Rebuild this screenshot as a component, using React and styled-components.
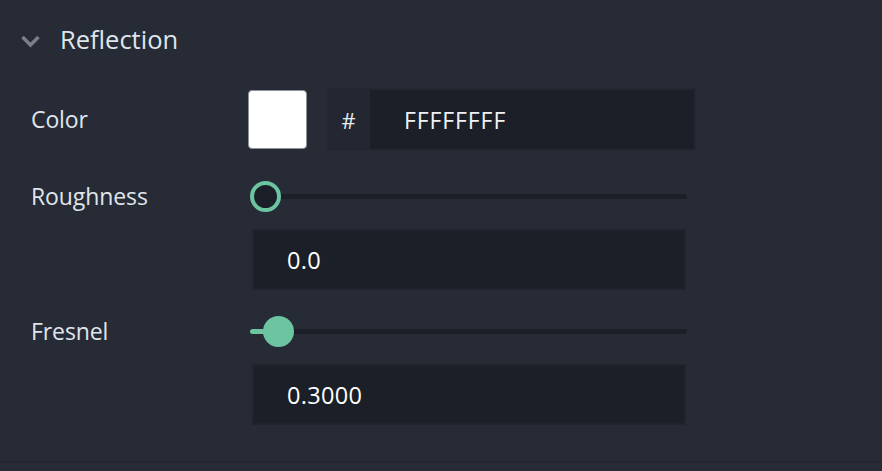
import React from "react";
import styled, { createGlobalStyle } from "styled-components";

const Global = createGlobalStyle`
  html, body { margin: 0; padding: 0; background: #262b36; }
  body { font-family: "Open Sans", "Noto Sans", sans-serif; }
`;

const Panel = styled.div`
  width: 882px;
  height: 462px;
  box-sizing: border-box;
  background: #262b36;
  border-bottom: 1px solid #21252e;
  display: flex;
  flex-direction: column;
`;

const Header = styled.div`
  height: 78px;
  display: flex;
  align-items: center;
  padding-left: 20px;
  gap: 19px;
  color: #dfe5ec;
  font-size: 25.5px;
`;

const Chevron = styled.svg`
  width: 21px;
  height: 14px;
  margin-top: 4px;
  filter: blur(0.6px);
`;

const Row = styled.div`
  display: grid;
  grid-template-columns: 217px 1fr;
  padding-left: 31px;
  margin-top: ${(p) => p.$top}px;
  align-items: start;
`;

const Label = styled.div`
  color: #e0e5eb;
  font-size: 23px;
  line-height: ${(p) => p.$lh}px;
  height: ${(p) => p.$lh}px;
  letter-spacing: -0.1px;
`;

const ColorControls = styled.div`
  display: flex;
  align-items: center;
  height: 63px;
  gap: 20px;
`;

const Swatch = styled.div`
  width: 57px;
  height: 57px;
  background: #ffffff;
  border: 1px solid #8d929b;
  border-radius: 4px;
`;

const HexBox = styled.div`
  width: 369px;
  height: 63px;
  box-sizing: border-box;
  background: #222731;
  display: flex;
  align-items: center;
  padding: 2px 2px 2px 0;
`;

const Hash = styled.span`
  width: 43px;
  text-align: center;
  color: #e6ebf1;
  font-size: 22px;
`;

const HexInput = styled.div`
  flex: 1;
  height: 59px;
  background: #1b1f27;
  display: flex;
  align-items: center;
  padding-left: 34px;
  color: #eef2f6;
  font-size: 23px;
  letter-spacing: 0.9px;
`;

const Field = styled.div`
  display: flex;
  flex-direction: column;
  gap: 17px;
`;

const SliderWrap = styled.div`
  position: relative;
  width: 437px;
  margin-left: 2px;
  height: 31px;
`;

const Track = styled.div`
  position: absolute;
  left: 0;
  right: 0;
  top: 13px;
  height: 5px;
  border-radius: 3px;
  background: #1b1f27;
`;

const Fill = styled.div`
  position: absolute;
  left: 0;
  top: 13px;
  height: 5px;
  border-radius: 3px;
  background: #6cc4a1;
`;

const Thumb = styled.div`
  position: absolute;
  top: 0;
  width: 31px;
  height: 31px;
  box-sizing: border-box;
  border-radius: 50%;
  background: ${(p) => (p.$filled ? "#6cc4a1" : "#1b1f27")};
  border: ${(p) => (p.$filled ? "none" : "4px solid #6cc4a1")};
`;

const NumberBox = styled.div`
  width: 434px;
  height: 61px;
  margin-left: 4px;
  box-sizing: border-box;
  background: #1b1f27;
  border: 2px solid #20242c;
  display: flex;
  align-items: center;
  padding-left: 33px;
  color: #ffffff;
  font-size: 23.5px;
  letter-spacing: 0.3px;
`;

function Slider({ value, max }) {
  const travel = 437 - 31;
  const x = (value / max) * travel;
  return (
    <SliderWrap>
      <Track />
      {value > 0 && <Fill style={{ width: x + 15 }} />}
      <Thumb $filled={value > 0} style={{ left: x }} />
    </SliderWrap>
  );
}

export default function App() {
  return (
    <>
      <Global />
      <Panel>
        <Header>
          <Chevron viewBox="0 0 21 14">
            <path d="M2.5 3 L10.5 11 L18.5 3" fill="none" stroke="#7a7f8a" strokeWidth="3.5" />
          </Chevron>
          Reflection
        </Header>
        <Row $top={10}>
          <Label $lh={63}>Color</Label>
          <ColorControls>
            <Swatch />
            <HexBox>
              <Hash>#</Hash>
              <HexInput>FFFFFFFF</HexInput>
            </HexBox>
          </ColorControls>
        </Row>
        <Row $top={30}>
          <Label $lh={31}>Roughness</Label>
          <Field>
            <Slider value={0} max={10} />
            <NumberBox>0.0</NumberBox>
          </Field>
        </Row>
        <Row $top={26}>
          <Label $lh={31}>Fresnel</Label>
          <Field>
            <Slider value={0.33} max={10} />
            <NumberBox>0.3000</NumberBox>
          </Field>
        </Row>
      </Panel>
    </>
  );
}
